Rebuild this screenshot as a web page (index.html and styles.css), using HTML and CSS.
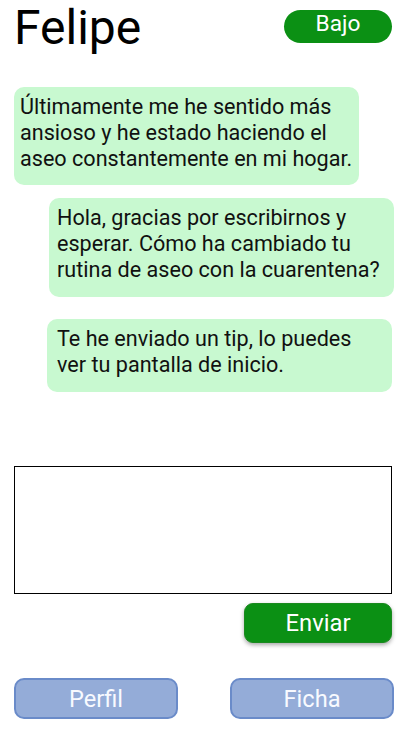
FILE: index.html
```html
<!DOCTYPE html>
<html lang="es">
<head>
<meta charset="utf-8">
<title>Felipe</title>
<link rel="stylesheet" href="styles.css">
</head>
<body>
<div class="screen">
  <header class="header">
    <h1 class="name">Felipe</h1>
    <span class="level">Bajo</span>
  </header>
  <div class="messages">
    <div class="bubble b1">Últimamente me he sentido más ansioso y he estado haciendo el aseo constantemente en mi hogar.</div>
    <div class="bubble b2">Hola, gracias por escribirnos y esperar. Cómo ha cambiado tu rutina de aseo con la cuarentena?</div>
    <div class="bubble b3">Te he enviado un tip, lo puedes ver tu pantalla de inicio.</div>
  </div>
  <textarea class="input"></textarea>
  <button class="send">Enviar</button>
  <nav class="nav">
    <button class="nav-btn">Perfil</button>
    <button class="nav-btn">Ficha</button>
  </nav>
</div>
</body>
</html>
```
FILE: styles.css
```css
* { box-sizing: border-box; }
html, body { margin: 0; padding: 0; background: #fff; }
body {
  font-family: Roboto, "Liberation Sans", sans-serif;
  color: #111;
  width: 411px;
  height: 731px;
  overflow: hidden;
}
.screen {
  display: flex;
  flex-direction: column;
  padding: 0 19px 0 14px;
}
.header {
  display: flex;
  justify-content: space-between;
  align-items: flex-start;
}
.name {
  margin: 0;
  font-size: 48px;
  font-weight: 400;
  line-height: 56px;
  color: #000;
}
.level {
  margin-top: 10px;
  width: 108px;
  height: 33px;
  border-radius: 17px;
  background: #0b9014;
  color: #fff;
  font-size: 22.7px;
  line-height: 28px;
  text-align: center;
}
.messages {
  display: flex;
  flex-direction: column;
  margin-top: 31px;
}
.bubble {
  width: 345px;
  background: #c8f9d0;
  border-radius: 10px;
  font-size: 21.6px;
  line-height: 26px;
  color: #111;
}
.b1 { padding: 7px 6px 13px 6px; }
.b2 { margin-top: 13px; margin-left: 35px; padding: 7px 6px 14px 8px; }
.b3 { margin-top: 22px; margin-left: 33px; padding: 7px 24px 14px 10px; }
.input {
  margin-top: 74px;
  width: 378px;
  height: 128px;
  border: 1px solid #000;
  border-radius: 0;
  resize: none;
  padding: 4px;
  font: inherit;
}
.send {
  align-self: flex-end;
  margin-top: 9px;
  width: 148px;
  height: 40px;
  border: 1px solid #1a8a1f;
  border-radius: 9px;
  background: #0b9014;
  color: #fff;
  font-family: inherit;
  font-size: 23.8px;
  box-shadow: 0 2px 4px rgba(0,0,0,0.35);
  padding: 0;
}
.nav {
  display: flex;
  justify-content: space-between;
  margin-top: 35px;
  margin-right: -2px;
}
.nav-btn {
  width: 164px;
  height: 41px;
  border: 2px solid #6a8bc9;
  border-radius: 10px;
  background: #94acd8;
  color: #f8faff;
  font-family: inherit;
  font-size: 23.6px;
  padding: 0;
}
```
